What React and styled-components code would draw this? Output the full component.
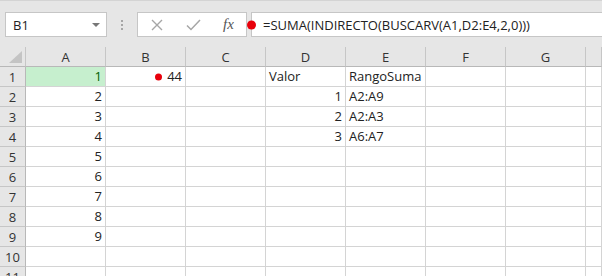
import styled, { createGlobalStyle } from "styled-components";

const Global = createGlobalStyle`
  html, body { margin: 0; padding: 0; background: #fff; overflow: hidden; }
  body { font-family: "Open Sans", "Noto Sans", sans-serif; }
`;

const Page = styled.div`
  width: 602px;
  height: 276px;
  overflow: hidden;
  background: #fff;
`;

const Bar = styled.div`
  height: 47px;
  box-sizing: border-box;
  background: #e6e6e6;
  border-top: 1px solid #d4d4d4;
  display: flex;
  align-items: flex-start;
  padding: 11px 0 0 5px;
`;

const NameBox = styled.div`
  width: 102px;
  height: 25px;
  box-sizing: border-box;
  background: #fff;
  border: 1px solid #c6c6c6;
  display: flex;
  align-items: center;
  justify-content: space-between;
  padding: 0 6px 0 7px;
  font-size: 13px;
  color: #222;
`;

const Caret = styled.span`
  width: 0;
  height: 0;
  border-left: 4px solid transparent;
  border-right: 4px solid transparent;
  border-top: 4px solid #777;
`;

const Grip = styled.div`
  width: 30px;
  height: 25px;
  display: flex;
  flex-direction: column;
  align-items: center;
  justify-content: center;
  gap: 2px;
  span {
    width: 2px;
    height: 2px;
    background: #a6a6a6;
  }
`;

const Buttons = styled.div`
  width: 110px;
  height: 25px;
  box-sizing: border-box;
  background: #fff;
  border: 1px solid #c6c6c6;
  display: flex;
  align-items: center;
  padding-left: 13px;
  gap: 23px;
`;

const Fx = styled.span`
  font-family: "Liberation Serif", serif;
  font-style: italic;
  font-size: 15px;
  color: #555;
  margin-left: -1px;
`;

const Formula = styled.div`
  position: relative;
  flex: 1;
  height: 25px;
  box-sizing: border-box;
  margin-left: 4px;
  background: #fff;
  border: 1px solid #c6c6c6;
  border-right: none;
  display: flex;
  align-items: center;
  padding-left: 11px;
  font-size: 13px;
  color: #222;
  white-space: nowrap;
`;

const Dot = styled.span`
  position: absolute;
  width: ${(p) => p.size}px;
  height: ${(p) => p.size}px;
  border-radius: 50%;
  background: #e8000b;
  left: ${(p) => p.left}px;
  top: 50%;
  transform: translateY(-50%);
`;

const Sheet = styled.div`
  display: grid;
  grid-template-columns: 26px repeat(7, 80px) 1fr;
  grid-auto-rows: 20px;
`;

const Head = styled.div`
  box-sizing: border-box;
  background: #e6e6e6;
  border-right: 1px solid #c6c6c6;
  border-bottom: 1px solid #b8b8b8;
  display: flex;
  align-items: center;
  justify-content: center;
  font-size: 13px;
  color: #333;
  position: relative;
`;

const RowHead = styled(Head)`
  border-bottom: 1px solid #c6c6c6;
  border-right: 1px solid #b8b8b8;
`;

const Corner = styled.span`
  position: absolute;
  right: 3px;
  bottom: 3px;
  width: 0;
  height: 0;
  border-left: 13px solid transparent;
  border-bottom: 12px solid #c4c4c4;
`;

const Cell = styled.div`
  box-sizing: border-box;
  position: relative;
  border-right: 1px solid #d4d4d4;
  border-bottom: 1px solid #d4d4d4;
  background: ${(p) => (p.good ? "#c6efce" : "#fff")};
  color: ${(p) => (p.good ? "#006100" : "#222")};
  font-size: 13px;
  line-height: 19px;
  padding: 0 3px;
  text-align: ${(p) => (p.num ? "right" : "left")};
  white-space: nowrap;
`;

const cols = ["A", "B", "C", "D", "E", "F", "G", ""];

const data = {
  1: { A: 1, B: 44, D: "Valor", E: "RangoSuma" },
  2: { A: 2, D: 1, E: "A2:A9" },
  3: { A: 3, D: 2, E: "A2:A3" },
  4: { A: 4, D: 3, E: "A6:A7" },
  5: { A: 5 },
  6: { A: 6 },
  7: { A: 7 },
  8: { A: 8 },
  9: { A: 9 },
  10: {},
  11: {},
};

function X() {
  return (
    <svg width="12" height="12" viewBox="0 0 12 12">
      <path d="M1 1L11 11M11 1L1 11" stroke="#a6a6a6" strokeWidth="1.4" fill="none" />
    </svg>
  );
}

function Check() {
  return (
    <svg width="15" height="12" viewBox="0 0 15 12">
      <path d="M1 6.5L5 10.5L14 1" stroke="#a6a6a6" strokeWidth="1.5" fill="none" />
    </svg>
  );
}

export default function App() {
  return (
    <Page>
      <Global />
      <Bar>
        <NameBox>
          B1
          <Caret />
        </NameBox>
        <Grip>
          <span />
          <span />
          <span />
        </Grip>
        <Buttons>
          <X />
          <Check />
          <Fx>fx</Fx>
        </Buttons>
        <Formula>
          <Dot size={9} left={-5} />
          =SUMA(INDIRECTO(BUSCARV(A1,D2:E4,2,0)))
        </Formula>
      </Bar>
      <Sheet>
        <Head>
          <Corner />
        </Head>
        {cols.map((c, i) => (
          <Head key={i}>{c}</Head>
        ))}
        {Object.keys(data).map((r) => {
          const row = data[r];
          return [
            <RowHead key={"h" + r}>{r}</RowHead>,
            ...cols.map((c, i) => {
              const v = row[c];
              const isNum = typeof v === "number";
              return (
                <Cell key={r + "-" + i} num={isNum} good={r === "1" && c === "A"}>
                  {r === "1" && c === "B" && <Dot size={7} left={49} />}
                  {v}
                </Cell>
              );
            }),
          ];
        })}
      </Sheet>
    </Page>
  );
}
